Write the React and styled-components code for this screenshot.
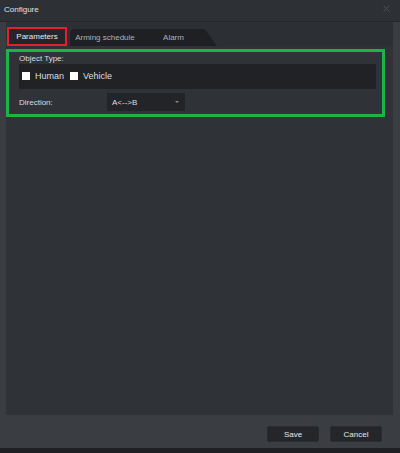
import React from 'react';
import styled, { createGlobalStyle } from 'styled-components';

const GlobalStyle = createGlobalStyle`
  html, body {
    margin: 0;
    padding: 0;
    background: #1e2023;
  }
  body {
    font-family: "Liberation Sans", Arial, sans-serif;
    font-size: 8px;
    -webkit-font-smoothing: antialiased;
  }
`;

const Dialog = styled.div`
  width: 400px;
  height: 453px;
  display: flex;
  flex-direction: column;
  background: #3a3d42;
  box-sizing: border-box;
  border-bottom: 5px solid #1e2023;
`;

const TitleBar = styled.div`
  height: 22px;
  flex: none;
  display: flex;
  align-items: center;
  justify-content: space-between;
  padding: 0 10px 2px 4px;
  box-sizing: border-box;
  background: #2d3035;
  border-bottom: 1px solid #25272b;
  color: #e0e2e5;
  font-size: 8px;
`;

const CloseIcon = styled.svg`
  width: 7px;
  height: 7px;
  margin-top: -2px;
`;

const TabStrip = styled.div`
  display: flex;
  align-items: flex-end;
  height: 24px;
  padding: 0 0 0 1px;
  box-sizing: border-box;
  background: #2c2f34;
  margin: 0 7px 0 6px;
`;

const Tab = styled.div`
  height: ${(p) => (p.$active ? '19px' : '17px')};
  box-sizing: border-box;
  display: flex;
  align-items: center;
  justify-content: center;
  width: ${(p) => p.$width}px;
  color: ${(p) => (p.$active ? '#e8eaec' : '#aeb1b6')};
  background: ${(p) => (p.$active ? '#23252a' : '#1e2024')};
  border: ${(p) => (p.$active ? '2px solid #e3202b' : 'none')};
  border-radius: ${(p) => (p.$first ? '5px 0 0 0' : '0')};
  clip-path: ${(p) =>
    p.$slant ? 'polygon(0 0, 84% 0, 100% 100%, 0 100%)' : 'none'};
  margin-left: ${(p) => p.$gap || 0}px;
  padding-right: ${(p) => (p.$slant ? 10 : 0)}px;
`;

const Panel = styled.div`
  flex: none;
  height: 369px;
  margin: 0 7px 0 6px;
  background: #2f3237;
  box-sizing: border-box;
  padding-top: 3px;
`;

const Group = styled.div`
  width: 379px;
  height: 68px;
  box-sizing: border-box;
  border: 3px solid #1db446;
  padding: 2px 6px 0 10px;
  display: flex;
  flex-direction: column;
`;

const Label = styled.div`
  color: #dcdee1;
  height: 9px;
  line-height: 9px;
`;

const TypeBox = styled.div`
  margin: 1px 0 0 0;
  height: 25px;
  background: #202226;
  display: flex;
  align-items: center;
  padding: 0 0 2px 3px;
  box-sizing: border-box;
  gap: 5px;
  color: #dcdee1;
  font-size: 9px;
`;

const Check = styled.span`
  width: 8px;
  height: 8px;
  background: #ffffff;
  display: inline-block;
  margin-left: ${(p) => p.$gap || 0}px;
`;

const Row = styled.div`
  display: flex;
  align-items: center;
  margin-top: 4px;
  height: 18px;
`;

const RowLabel = styled.div`
  width: 88px;
  color: #dcdee1;
`;

const Select = styled.div`
  width: 78px;
  height: 18px;
  background: #222428;
  color: #dcdee1;
  display: flex;
  align-items: center;
  justify-content: space-between;
  padding: 0 6px 0 5px;
  box-sizing: border-box;
`;

const Caret = styled.span`
  width: 0;
  height: 0;
  border-left: 2px solid transparent;
  border-right: 2px solid transparent;
  border-top: 2px solid #8a8d92;
`;

const Footer = styled.div`
  flex: 1;
  display: flex;
  justify-content: flex-end;
  align-items: flex-start;
  gap: 11px;
  padding: 11px 18px 0 0;
`;

const Button = styled.button`
  width: 52px;
  height: 16px;
  background: #24262a;
  border: 1px solid #2a2c30;
  border-radius: 2px;
  color: #e6e8ea;
  font-family: "Liberation Sans", Arial, sans-serif;
  font-size: 8px;
  padding: 0;
`;

export default function App() {
  return (
    <>
      <GlobalStyle />
      <Dialog>
        <TitleBar>
          <span>Configure</span>
          <CloseIcon viewBox="0 0 7 7">
            <path d="M0.5 0.5 L6.5 6.5 M6.5 0.5 L0.5 6.5" stroke="#4b4e53" strokeWidth="1" />
          </CloseIcon>
        </TitleBar>
        <TabStrip>
          <Tab $active $width={60}>Parameters</Tab>
          <Tab $width={70} $gap={3} $first>Arming schedule</Tab>
          <Tab $width={77} $slant>Alarm</Tab>
        </TabStrip>
        <Panel>
          <Group>
            <Label>Object Type:</Label>
            <TypeBox>
              <Check />
              <span>Human</span>
              <Check $gap={1} />
              <span>Vehicle</span>
            </TypeBox>
            <Row>
              <RowLabel>Direction:</RowLabel>
              <Select>
                <span>A&lt;--&gt;B</span>
                <Caret />
              </Select>
            </Row>
          </Group>
        </Panel>
        <Footer>
          <Button>Save</Button>
          <Button>Cancel</Button>
        </Footer>
      </Dialog>
    </>
  );
}
